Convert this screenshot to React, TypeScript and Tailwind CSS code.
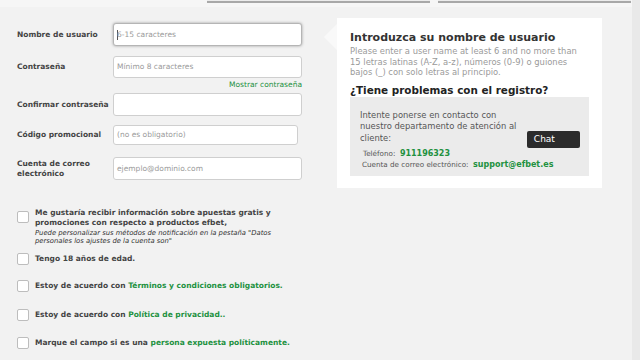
import React from "react";

const G = "text-[#22913f]";

function Field({ label, placeholder, w = "w-[189px]", h = "h-[23px]", focus = false, mt }: { label: React.ReactNode; placeholder?: string; w?: string; h?: string; focus?: boolean; mt: string }) {
  return (
    <div className={`flex items-center ${mt}`}>
      <div className="w-[113px] shrink-0 whitespace-nowrap pl-[17px] font-bold text-[7.5px] leading-[9.5px] text-[#444]">{label}</div>
      <div className={`${w} ${h} shrink-0 bg-white rounded-[3px] border flex items-center pl-[3px] text-[7.5px] text-[#9a9a9a] ${focus ? "border-[#b5b5b5] shadow-[0_0_3px_rgba(0,0,0,0.35)]" : "border-[#cfcfcf]"}`}>
        {focus && <span className="w-px h-[10px] bg-[#555] mr-[-1px]" />}
        {placeholder}
      </div>
    </div>
  );
}

function Check({ children, mt, top = false }: { children: React.ReactNode; mt: string; top?: boolean }) {
  return (
    <div className={`flex items-start pl-[17px] ${mt}`}>
      <div className="w-[12px] h-[12px] bg-white border border-[#bdbdbd] rounded-[2px] shrink-0" />
      <div className={`ml-[6px] text-[7.5px] leading-[10.3px] font-bold text-[#444] ${top ? "mt-[-3px]" : "pt-[1px]"}`}>{children}</div>
    </div>
  );
}

export default function App() {
  return (
    <div className="w-[640px] h-[360px] overflow-hidden bg-[#f2f2f2] flex" style={{ fontFamily: '"DejaVu Sans", Verdana, sans-serif' }}>
      <div className="flex-1 flex flex-col">
        <div className="h-[7px] bg-[#f6f6f6] flex">
          <div className="ml-[207px] w-[223px] h-[3px] border-b-2 border-[#a8a8a8] bg-[#ececec]" />
          <div className="ml-[8px] w-[193px] h-[3px] border-b-2 border-[#a8a8a8] bg-[#ececec]" />
        </div>
        <div className="flex">
          <div className="w-[320px] flex flex-col">
            <Field mt="mt-[16px]" label="Nombre de usuario" placeholder="6-15 caracteres" focus />
            <Field mt="mt-[10px]" h="h-[22px]" label="Contraseña" placeholder="Mínimo 8 caracteres" />
            <div className="w-[302px] text-right text-[7.5px] leading-[9px] mt-[2px] text-[#22913f]">Mostrar contraseña</div>
            <Field mt="mt-[4px]" label="Confirmar contraseña" />
            <Field mt="mt-[9px]" w="w-[185px]" h="h-[20px]" label="Código promocional" placeholder="(no es obligatorio)" />
            <Field mt="mt-[12px]" label={<>Cuenta de correo<br />electrónico</>} placeholder="ejemplo@dominio.com" />
            <Check mt="mt-[31px]" top>
              <div>Me gustaría recibir información sobre apuestas gratis y</div>
              <div>promociones con respecto a productos efbet,</div>
              <div className="font-normal italic text-[6.8px] leading-[8.5px] text-[#333]">Puede personalizar sus métodos de notificación en la pestaña "Datos</div>
              <div className="font-normal italic text-[6.8px] leading-[8.5px] text-[#333]">personales los ajustes de la cuenta son"</div>
            </Check>
            <Check mt="mt-[7px]">Tengo 18 años de edad.</Check>
            <Check mt="mt-[15px]">Estoy de acuerdo con <span className={G}>Términos y condiciones obligatorios.</span></Check>
            <Check mt="mt-[17px]">Estoy de acuerdo con <span className={G}>Política de privacidad..</span></Check>
            <Check mt="mt-[16px]">Marque el campo si es una <span className={G}>persona expuesta políticamente.</span></Check>
          </div>
          <div className="flex-1 pt-[11px] pl-[17px]">
            <div className="relative w-[265px] bg-white px-[13px] pt-[13px] pb-[12px]">
              <div className="absolute left-[-13px] top-[6px] w-0 h-0 border-y-[13px] border-y-transparent border-r-[13px] border-r-[#f9f9f9]" />
              <div className="font-bold text-[11px] leading-[13px] text-[#333]">Introduzca su nombre de usuario</div>
              <div className="text-[8.4px] leading-[10.5px] text-[#9a9a9a] mt-[2px]">Please enter a user name at least 6 and no more than 15 letras latinas (A-Z, a-z), números (0-9) o guiones bajos (_) con solo letras al principio.</div>
              <div className="font-bold text-[10.4px] leading-[14px] text-[#222] mt-[5px]">¿Tiene problemas con el registro?</div>
              <div className="bg-[#ebebeb] mt-[0px] pl-[10px] pr-[10px] pt-[13px] pb-[6px] flex flex-col">
                <div className="flex items-end">
                  <div className="text-[8.4px] leading-[11.5px] text-[#555] w-[170px]">Intente ponerse en contacto con nuestro departamento de atención al cliente:</div>
                  <div className="ml-auto mb-[-4px] mr-[-1px] w-[54px] h-[17px] bg-[#2b2b2b] rounded-[2px] text-white text-[9px] flex items-center pl-[7px]">Chat</div>
                </div>
                <div className="pl-[3px] mt-[4px] text-[7.2px] leading-[11px] text-[#555]">Teléfono:&nbsp; <span className="font-bold text-[8px] text-[#22913f]">911196323</span></div>
                <div className="pl-[2px] text-[7.2px] leading-[11px] text-[#555]">Cuenta de correo electrónico:&nbsp; <span className="font-bold text-[8px] text-[#22913f]">support@efbet.es</span></div>
              </div>
            </div>
          </div>
        </div>
      </div>
      <div className="w-[8px] bg-[#e9e9e9]" />
    </div>
  );
}
